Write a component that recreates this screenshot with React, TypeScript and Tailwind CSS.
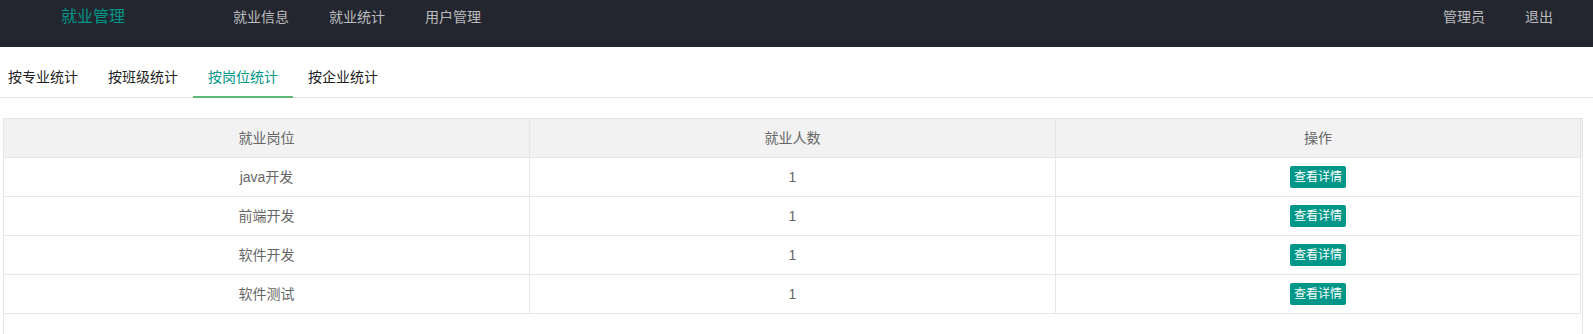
const font = "font-['Liberation_Sans','Noto_Sans_CJK_SC',sans-serif]";

const navLeft = ['就业信息', '就业统计', '用户管理'];
const tabs = ['按专业统计', '按班级统计', '按岗位统计', '按企业统计'];
const rows = [
  { post: 'java开发', count: 1 },
  { post: '前端开发', count: 1 },
  { post: '软件开发', count: 1 },
  { post: '软件测试', count: 1 },
];

const Header = () => (
  <div className="h-[47px] bg-[#23262e]">
    <div className="flex h-[33px] items-center">
      <div className="ml-[61px] w-[152px] text-[16px] leading-5 text-[#009688]">就业管理</div>
      <ul className="flex">
        {navLeft.map((item) => (
          <li key={item} className="px-5 text-[14px] leading-5 text-white/70">
            {item}
          </li>
        ))}
      </ul>
      <ul className="ml-auto mr-[20px] flex">
        <li className="px-5 text-[14px] leading-5 text-white/70">管理员</li>
        <li className="px-5 text-[14px] leading-5 text-white/70">退出</li>
      </ul>
    </div>
  </div>
);

const Tabs = ({ active }: { active: number }) => (
  <ul className="mt-[10px] flex h-[41px] border-b border-[#e6e6e6]">
    {tabs.map((t, i) => (
      <li
        key={t}
        className={`relative h-[40px] w-[100px] text-center text-[14px] leading-[40px] first:ml-[-7px] ${
          i === active ? 'text-[#009688]' : 'text-[#222]'
        }`}
      >
        {t}
        {i === active && <span className="absolute left-0 top-[39px] h-[2px] w-full bg-[#5fb878]" />}
      </li>
    ))}
  </ul>
);

const cell = 'flex h-[39px] items-center justify-center border-b border-r border-[#e6e6e6] text-[14px] text-[#666]';

const Table = () => (
  <div className="ml-[3px] mt-[20px] h-[216px] w-[1580px] overflow-hidden border-x border-t border-[#e6e6e6]">
    <div className="bg-[#f2f2f2]">
      <div className="grid w-[1577px] grid-cols-[526px_526px_525px]">
        <div className={cell}>就业岗位</div>
        <div className={cell}>就业人数</div>
        <div className={cell}>操作</div>
      </div>
    </div>
    <div className="grid w-[1577px] grid-cols-[526px_526px_525px]">
      {rows.map((r) => (
        <div key={r.post} className="contents">
          <div className={cell}>{r.post}</div>
          <div className={cell}>{r.count}</div>
          <div className={cell}>
            <button className="h-[22px] rounded-[2px] bg-[#009688] px-[4px] text-[12px] leading-[22px] text-white">
              查看详情
            </button>
          </div>
        </div>
      ))}
    </div>
  </div>
);

export default function App() {
  return (
    <div className={`h-[334px] w-full overflow-hidden bg-white ${font}`}>
      <Header />
      <Tabs active={2} />
      <Table />
    </div>
  );
}
